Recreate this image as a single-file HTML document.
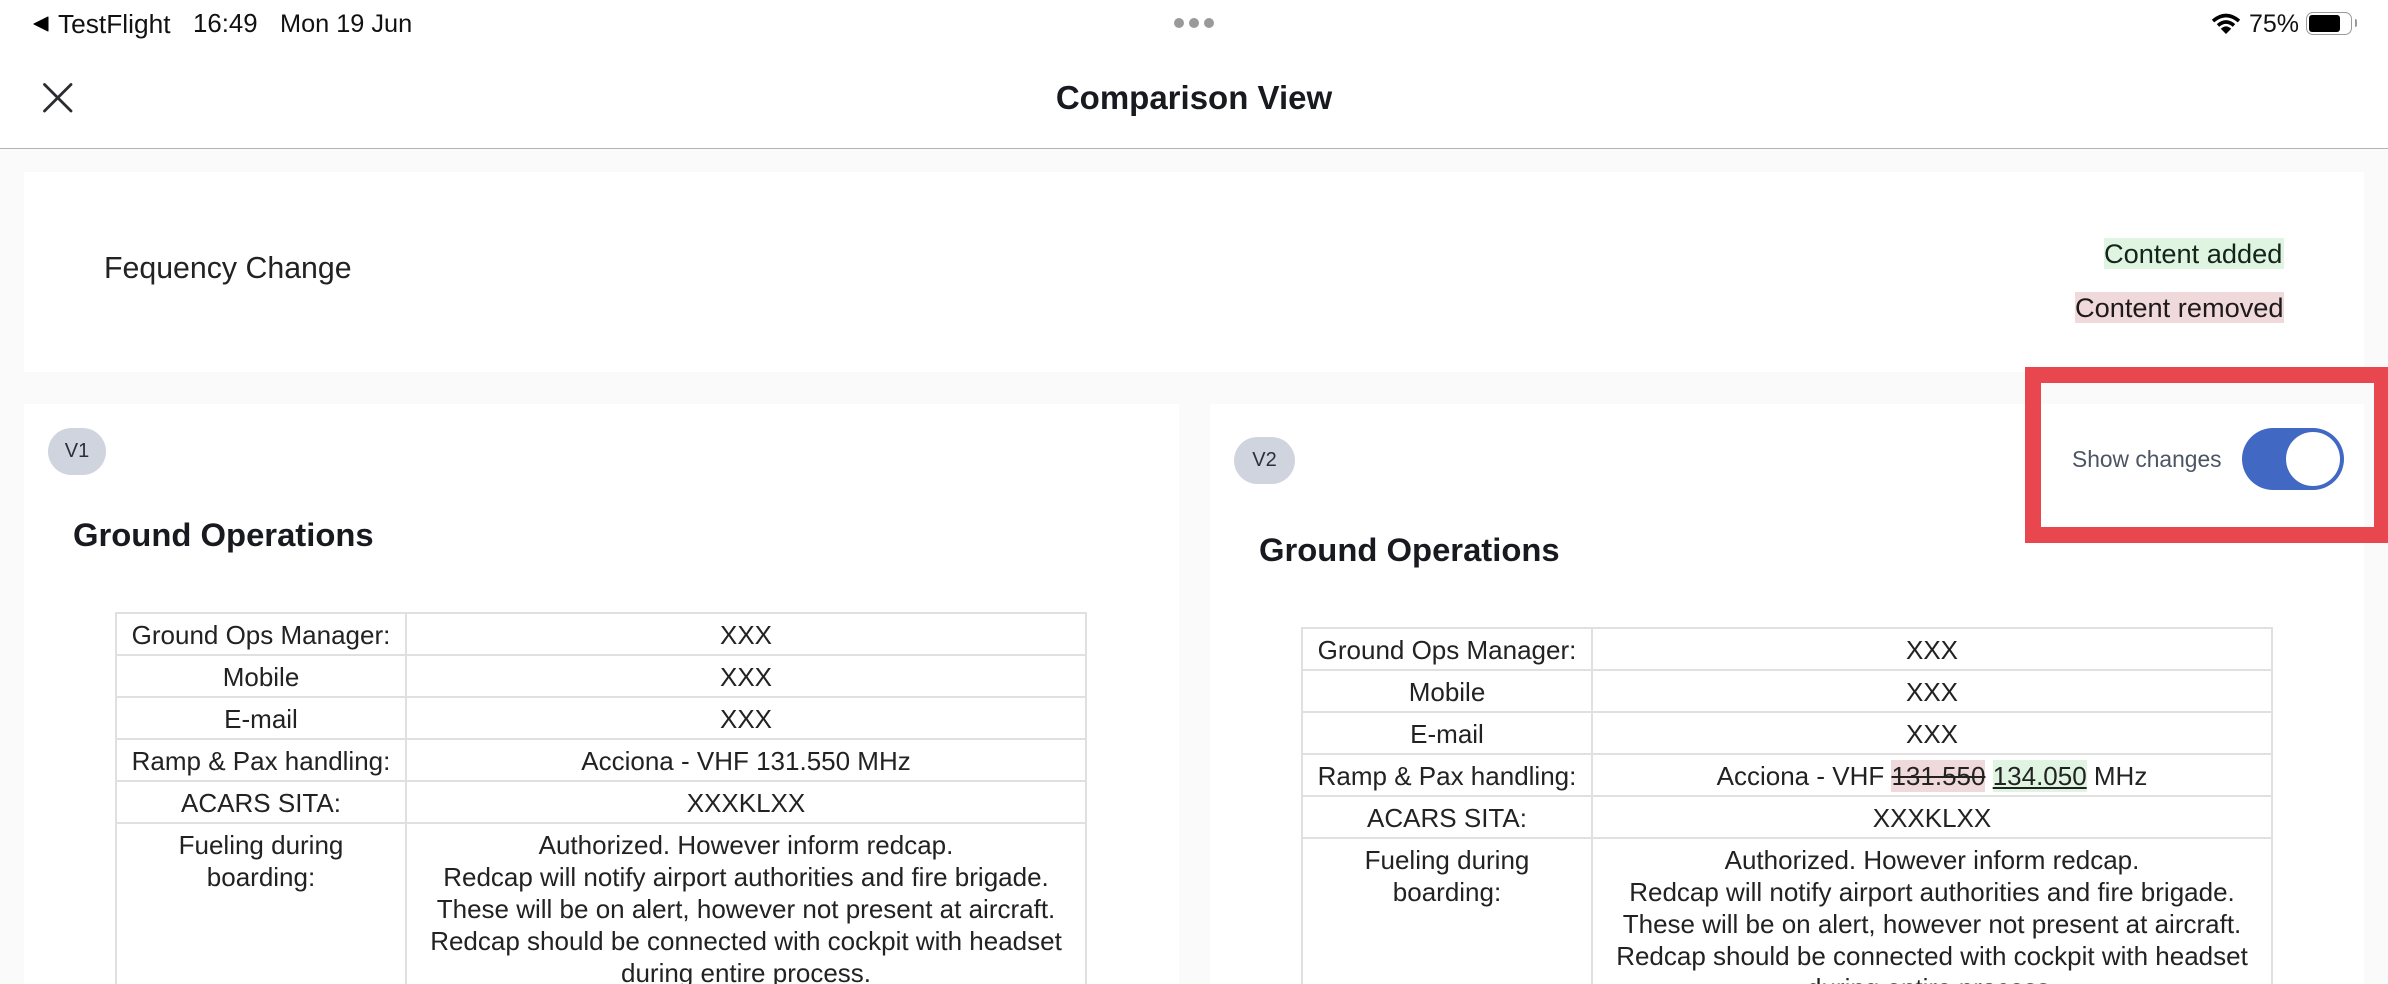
<!DOCTYPE html>
<html>
<head>
<meta charset="utf-8">
<style>
html,body{margin:0;padding:0;width:2388px;height:984px;overflow:hidden;background:#fafafa;font-family:"Liberation Sans",sans-serif;}
#wrap{position:relative;width:2388px;height:984px;overflow:hidden;background:#fafafa;}
.a{position:absolute;white-space:nowrap;}
.card{position:absolute;background:#fff;}
table{position:absolute;border-collapse:collapse;table-layout:fixed;width:972px;font-size:26px;line-height:32px;color:#222;text-align:center;}
td{border:2px solid #e0e0e0;padding:5px 0 3px;vertical-align:top;}
td:first-child{width:288px;}
h2{position:absolute;margin:0;font-size:32.8px;line-height:40px;font-weight:700;color:#181a20;white-space:nowrap;}
.badge{position:absolute;background:#cfd4df;border-radius:24px;text-align:center;color:#2b2f38;font-size:20px;}
.del{background:#f0d9da;text-decoration:line-through;padding:1px 0;}
.ins{background:#dff5e1;text-decoration:underline;padding:1px 0;}
</style>
</head>
<body>
<div id="wrap">
<!-- header -->
<div style="position:absolute;left:0;top:0;width:2388px;height:148px;background:#fff;border-bottom:1.5px solid #b5b5b5;"></div>
<svg class="a" style="left:32px;top:15px" width="20" height="18" viewBox="0 0 20 18"><path d="M16 2 L2 9 L16 16 Z" fill="#000" stroke="#000" stroke-width="1" stroke-linejoin="round"/></svg>
<div class="a" style="left:58px;top:9px;font-size:26.3px;line-height:30px;color:#111;">TestFlight</div>
<div class="a" style="left:193px;top:9px;font-size:25.8px;line-height:30px;color:#111;">16:49</div>
<div class="a" style="left:280px;top:9px;font-size:25.3px;line-height:30px;color:#111;">Mon 19 Jun</div>
<svg class="a" style="left:1170px;top:16px" width="48" height="14"><circle cx="9" cy="7" r="5" fill="#9a9a9a"/><circle cx="24" cy="7" r="5" fill="#9a9a9a"/><circle cx="39" cy="7" r="5" fill="#9a9a9a"/></svg>
<svg class="a" style="left:2211px;top:13px" width="30" height="22" viewBox="0 0 30 22"><path d="M2 8 Q15 -3 28 8" fill="none" stroke="#000" stroke-width="3.6"/><path d="M7 12.5 Q15 5.5 23 12.5" fill="none" stroke="#000" stroke-width="3.6"/><path d="M9.8 15.8 Q15 11 20.2 15.8 L15 21 Z" fill="#000"/></svg>
<div class="a" style="left:2249px;top:9px;font-size:25px;line-height:30px;color:#111;">75%</div>
<div class="a" style="left:2306px;top:12px;width:44px;height:21px;border:1.5px solid #9a9a9a;border-radius:7px;"></div>
<div class="a" style="left:2309px;top:15px;width:31px;height:17px;background:#000;border-radius:3px;"></div>
<div class="a" style="left:2355px;top:19px;width:2px;height:8px;background:#9a9a9a;border-radius:0 3px 3px 0;"></div>
<svg class="a" style="left:40px;top:80px" width="36" height="36" viewBox="0 0 36 36"><path d="M4.5 4.5 L31 31 M31 4.5 L4.5 31" stroke="#2a2c30" stroke-width="2.8" stroke-linecap="round" fill="none"/></svg>
<div class="a" style="left:0;width:2388px;top:78px;text-align:center;font-size:33px;line-height:40px;font-weight:700;color:#181a20;">Comparison View</div>

<!-- top card -->
<div class="card" style="left:24px;top:172px;width:2340px;height:200px;"></div>
<div class="a" style="left:104px;top:251px;font-size:30.3px;line-height:36px;color:#222;">Fequency Change</div>
<div class="a" style="left:2104px;top:238px;width:180px;height:31px;background:#dff5e1;font-size:27.2px;line-height:31px;color:#14241a;">Content added</div>
<div class="a" style="left:2075px;top:292px;width:209px;height:31px;background:#f0d9da;font-size:27.2px;line-height:31px;color:#1e1a1c;">Content removed</div>

<!-- V1 -->
<div class="card" style="left:24px;top:404px;width:1155px;height:580px;"></div>
<div class="badge" style="left:48px;top:428px;width:58px;height:47px;line-height:47px;">V1</div>
<h2 style="left:73px;top:515px;">Ground Operations</h2>
<table style="left:115px;top:612px;">
<tr><td>Ground Ops Manager:</td><td>XXX</td></tr>
<tr><td>Mobile</td><td>XXX</td></tr>
<tr><td>E-mail</td><td>XXX</td></tr>
<tr><td>Ramp &amp; Pax handling:</td><td>Acciona - VHF 131.550 MHz</td></tr>
<tr><td>ACARS SITA:</td><td>XXXKLXX</td></tr>
<tr><td>Fueling during<br>boarding:</td><td>Authorized. However inform redcap.<br>Redcap will notify airport authorities and fire brigade.<br>These will be on alert, however not present at aircraft.<br>Redcap should be connected with cockpit with headset<br>during entire process.</td></tr>
</table>

<!-- V2 -->
<div class="card" style="left:1210px;top:404px;width:1154px;height:580px;"></div>
<div class="badge" style="left:1234px;top:437px;width:61px;height:47px;line-height:47px;">V2</div>
<h2 style="left:1259px;top:530px;">Ground Operations</h2>
<table style="left:1301px;top:627px;">
<tr><td>Ground Ops Manager:</td><td>XXX</td></tr>
<tr><td>Mobile</td><td>XXX</td></tr>
<tr><td>E-mail</td><td>XXX</td></tr>
<tr><td>Ramp &amp; Pax handling:</td><td>Acciona - VHF <span class="del">131.550</span> <span class="ins">134.050</span> MHz</td></tr>
<tr><td>ACARS SITA:</td><td>XXXKLXX</td></tr>
<tr><td>Fueling during<br>boarding:</td><td>Authorized. However inform redcap.<br>Redcap will notify airport authorities and fire brigade.<br>These will be on alert, however not present at aircraft.<br>Redcap should be connected with cockpit with headset<br>during entire process.</td></tr>
</table>

<!-- toggle -->
<div class="a" style="left:2072px;top:445px;font-size:22.8px;line-height:28px;color:#4b5563;">Show changes</div>
<div class="a" style="left:2242px;top:428px;width:102px;height:62px;background:#4169c4;border-radius:31px;"></div>
<div class="a" style="left:2286px;top:432px;width:54px;height:54px;background:#fff;border-radius:50%;"></div>

<!-- red highlight -->
<div class="a" style="left:2025px;top:367px;width:333px;height:144px;border:16px solid #e9474f;"></div>
</div>
</body>
</html>
